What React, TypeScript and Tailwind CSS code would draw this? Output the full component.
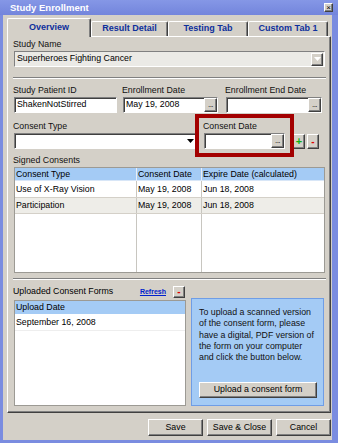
const sunken =
  "border border-t-[#808080] border-l-[#808080] border-b-white border-r-white shadow-[inset_1px_1px_0_#404040]";
const raised =
  "bg-[#d4d0c8] border border-t-white border-l-white border-b-[#404040] border-r-[#404040] shadow-[inset_-1px_-1px_0_#808080]";

function Dots() {
  return (
    <div className={`${raised} w-[13px] h-[14px] flex items-center justify-center text-[8px] leading-none tracking-[-0.5px] text-black shrink-0`}>
      ...
    </div>
  );
}

function DateField({ value = "", w }: { value?: string; w: string }) {
  return (
    <div className={`${sunken} ${w} h-[16px] bg-white flex items-center pl-[2px]`}>
      <span className="flex-1 truncate">{value}</span>
      <Dots />
    </div>
  );
}

function Label({ children }: { children: React.ReactNode }) {
  return <div className="h-[13px] leading-[13px] text-[#111] -ml-px whitespace-nowrap">{children}</div>;
}

function Tab({ label, w, active }: { label: string; w: string; active?: boolean }) {
  return (
    <div
      className={`${w} ${
        active ? "h-[19px] z-10 -mb-px" : "h-[15px]"
      } bg-[#d4d0c8] border border-b-0 border-t-white border-l-white border-r-[#404040] rounded-t-[2px] flex items-center justify-center font-bold text-[9px] text-[#0d2f9c] shadow-[inset_-1px_0_0_#808080]`}
    >
      {label}
    </div>
  );
}

const cols = "grid grid-cols-[122px_65px_1fr]";

export default function App() {
  return (
    <div className="w-[338px] h-[443px] bg-[#7a8ce0] flex flex-col font-['Liberation_Sans',Arial,sans-serif] text-[8.8px] text-black overflow-hidden">
      <div className="h-[15px] shrink-0 flex items-center justify-between pl-[10px] pr-[5px] bg-gradient-to-b from-[#8597e6] to-[#7385dc]">
        <span className="text-white font-bold text-[9.5px] leading-none">Study Enrollment</span>
        <div className={`${raised} w-[9px] h-[9px] flex items-center justify-center text-[8px] leading-none`}>×</div>
      </div>

      <div className="flex-1 ml-[3px] mr-[6px] mb-[3px] bg-[#d4d0c8] flex flex-col pt-[3px] pb-[4px]">
        <div className="flex items-end pl-[4px] h-[18px]">
          <Tab label="Overview" w="w-[84px]" active />
          <Tab label="Result Detail" w="w-[77px]" />
          <Tab label="Testing Tab" w="w-[80px]" />
          <Tab label="Custom Tab 1" w="w-[80px]" />
        </div>

        <div className="relative ml-[4px] mr-[1px] h-[377px] border border-t-white border-l-white border-b-[#404040] border-r-[#404040] shadow-[inset_-1px_-1px_0_#808080] pt-[1px] pl-[6px] pr-[6px] pb-[6px] flex flex-col">
          <Label>Study Name</Label>
          <div className="w-[311px] h-[16px] border border-t-[#808080] border-l-[#808080] border-b-white border-r-white bg-[#ebeae6] flex items-center pl-[2px]">
            <span className="flex-1">Superheroes Fighting Cancer</span>
            <div className={`${raised} w-[12px] h-[13px] flex items-center justify-center mr-px`}>
              <svg width="7" height="4" viewBox="0 0 7 4">
                <path d="M0 0h7L3.5 4z" fill="#fff" />
              </svg>
            </div>
          </div>

          <div className="mt-[10px] h-[2px] w-[313px] -ml-px border-t border-t-[#808080] border-b border-b-white" />

          <div className="mt-[5px] flex">
            <div className="w-[103px]">
              <Label>Study Patient ID</Label>
              <div className={`${sunken} h-[16px] bg-white flex items-center pl-[2px]`}>ShakenNotStirred</div>
            </div>
            <div className="ml-[6px] w-[95px]">
              <Label>Enrollment Date</Label>
              <DateField value="May 19, 2008" w="w-[95px]" />
            </div>
            <div className="ml-[8px] w-[96px]">
              <Label>Enrollment End Date</Label>
              <DateField w="w-[96px]" />
            </div>
          </div>

          <div className="mt-[7px] flex items-end">
            <div className="w-[182px]">
              <Label>Consent Type</Label>
              <div className={`${sunken} h-[16px] bg-white flex items-center justify-end`}>
                <div className="w-[10px] h-[13px] flex items-center justify-center">
                  <svg width="7" height="4" viewBox="0 0 7 4">
                    <path d="M0 0h7L3.5 4z" fill="#000" />
                  </svg>
                </div>
              </div>
            </div>
            <div className="ml-[8px] w-[81px]">
              <Label>Consent Date</Label>
              <DateField w="w-[81px]" />
            </div>
            <div className={`${raised} ml-[8px] w-[12px] h-[15px] flex items-center justify-center text-[#10b010] font-bold text-[11px] leading-none`}>+</div>
            <div className={`${raised} ml-[2px] w-[12px] h-[15px] flex items-center justify-center text-[#e00000] font-bold text-[10px] leading-none`}>-</div>
          </div>

          <div className="mt-[5px]">
            <Label>Signed Consents</Label>
          </div>
          <div className="w-[311px] h-[106px] border border-[#9c9a94] bg-white flex flex-col">
            <div className={`${cols} h-[13px] bg-[#a4cbf5] border-b border-b-[#d8e6f7]`}>
              <div className="pl-[1px] leading-[13px] border-r border-r-[#e8eef8]">Consent Type</div>
              <div className="pl-[1px] leading-[13px] border-r border-r-[#e8eef8]">Consent Date</div>
              <div className="pl-[1px] leading-[13px]">Expire Date (calculated)</div>
            </div>
            <div className={`${cols} h-[17px] bg-white border-b border-b-[#d4d0c8]`}>
              <div className="pl-[1px] leading-[16px] border-r border-r-[#c8c6c0]">Use of X-Ray Vision</div>
              <div className="pl-[1px] leading-[16px] border-r border-r-[#c8c6c0]">May 19, 2008</div>
              <div className="pl-[1px] leading-[16px]">Jun 18, 2008</div>
            </div>
            <div className={`${cols} h-[16px] bg-[#eeede8] border-b border-b-[#d4d0c8]`}>
              <div className="pl-[1px] leading-[15px] border-r border-r-[#c8c6c0]">Participation</div>
              <div className="pl-[1px] leading-[15px] border-r border-r-[#c8c6c0]">May 19, 2008</div>
              <div className="pl-[1px] leading-[15px]">Jun 18, 2008</div>
            </div>
            <div className={`${cols} flex-1`}>
              <div className="border-r border-r-[#c8c6c0]" />
              <div className="border-r border-r-[#c8c6c0]" />
              <div />
            </div>
          </div>

          <div className="mt-[5px] h-[2px] w-[313px] -ml-px border-t border-t-[#808080] border-b border-b-white" />

          <div className="mt-[4px] flex items-start">
            <div className="w-[172px] flex flex-col">
              <div className="h-[16px] flex items-center justify-between">
                <span className="-ml-px">Uploaded Consent Forms</span>
                <div className="flex items-center">
                  <span className="text-[7px] font-bold text-[#0022cc] underline">Refresh</span>
                  <div className={`${raised} ml-[7px] mr-px w-[12px] h-[12px] flex items-center justify-center text-[#e00000] font-bold text-[10px] leading-none`}>-</div>
                </div>
              </div>
              <div className="h-[106px] border border-[#9c9a94] bg-white flex flex-col">
                <div className="h-[13px] bg-[#a4cbf5] pl-[1px] leading-[13px]">Upload Date</div>
                <div className="h-[17px] pl-[1px] leading-[17px] border-b border-b-[#eeeeee]">September 16, 2008</div>
              </div>
            </div>
            <div className="ml-[5px] mt-[14px] w-[133px] h-[108px] bg-[#a4cbf5] border border-[#6f9de6] flex flex-col justify-between pt-[8px] pb-[7px] pl-[7px]">
              <p className="leading-[11.3px] whitespace-nowrap text-[#111]">
                To upload a scanned version
                <br />
                of the consent form, please
                <br />
                have a digital, PDF version of
                <br />
                the form on your computer
                <br />
                and click the button below.
              </p>
              <div className={`${raised} w-[118px] h-[16px] flex items-center justify-center`}>Upload a consent form</div>
            </div>
          </div>

          <div className="pointer-events-none absolute left-[187px] top-[77px] w-[99px] h-[43px] border-4 border-[#a30000]" />
        </div>

        <div className="mt-[6px] flex justify-end gap-[4px] pr-[1px]">
          <div className={`${raised} w-[55px] h-[17px] flex items-center justify-center`}>Save</div>
          <div className={`${raised} w-[65px] h-[17px] flex items-center justify-center`}>Save &amp; Close</div>
          <div className={`${raised} w-[55px] h-[17px] flex items-center justify-center`}>Cancel</div>
        </div>
      </div>
    </div>
  );
}
